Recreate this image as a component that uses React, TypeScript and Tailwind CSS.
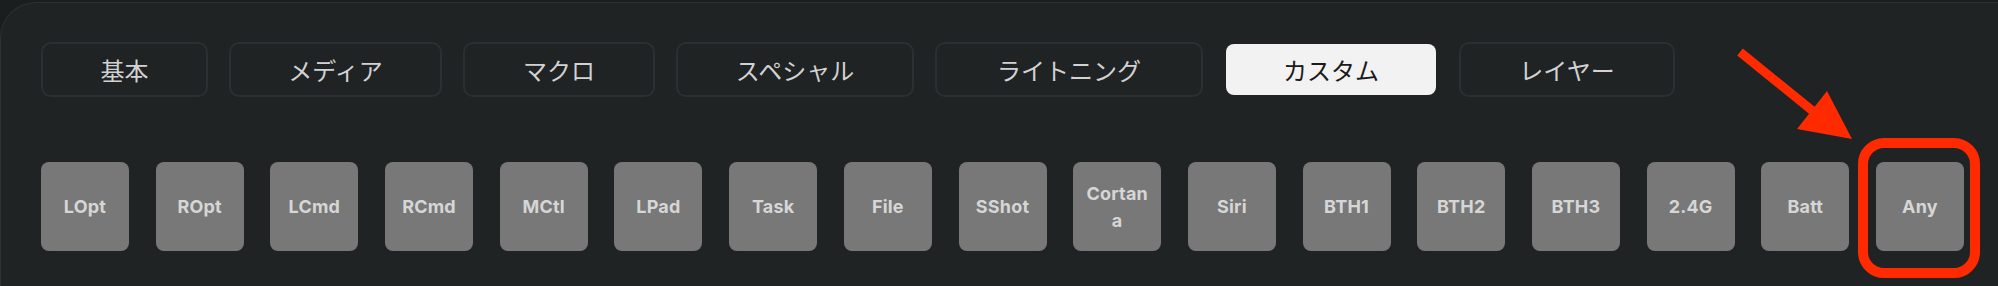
import React from 'react';

type Tab = { label: string; width: string; active?: boolean };

const tabs: Tab[] = [
  { label: '基本', width: 'w-[167px]' },
  { label: 'メディア', width: 'w-[213px]' },
  { label: 'マクロ', width: 'w-[192px]' },
  { label: 'スペシャル', width: 'w-[238px]' },
  { label: 'ライトニング', width: 'w-[268px]' },
  { label: 'カスタム', width: 'w-[214px]', active: true },
  { label: 'レイヤー', width: 'w-[216px]' },
];

const keys = [
  'LOpt',
  'ROpt',
  'LCmd',
  'RCmd',
  'MCtl',
  'LPad',
  'Task',
  'File',
  'SShot',
  'Cortana',
  'Siri',
  'BTH1',
  'BTH2',
  'BTH3',
  '2.4G',
  'Batt',
  'Any',
];

const TabButton = ({ tab }: { tab: Tab }) => (
  <button
    type="button"
    className={
      tab.active
        ? `${tab.width} flex h-[55px] items-center justify-center rounded-[10px] border-2 border-transparent bg-[#f2f2f2] bg-clip-padding text-[24px] text-[#1a1a1a]`
        : `${tab.width} flex h-[55px] items-center justify-center rounded-[10px] border-2 border-[#2b2f31] text-[24px] text-[#d2d2d2]`
    }
    style={{ fontFamily: '"Noto Sans CJK JP", "Noto Sans", sans-serif' }}
  >
    {tab.label}
  </button>
);

const KeyButton = ({ label }: { label: string }) => (
  <button
    type="button"
    className="flex h-[89px] w-[88px] shrink-0 items-center justify-center rounded-[8px] bg-[#787878] px-[10px] text-center text-[18px] font-bold leading-[27px] tracking-[0.2px] break-all text-[#d6d6d6]"
    style={{ fontFamily: 'Inter, "Liberation Sans", sans-serif' }}
  >
    {label}
  </button>
);

export default function App() {
  return (
    <div className="relative h-[286px] w-[1998px] overflow-hidden bg-[#1b1e1f]">
      <div className="mt-[2px] h-[300px] w-[2040px] rounded-tl-[36px] border-t border-l border-[#2d3133] bg-[#1f2324] pt-[39px] pl-[40px]">
        <div className="flex gap-[21px]">
          {tabs.map((tab) => (
            <TabButton key={tab.label} tab={tab} />
          ))}
        </div>
        <div className="mt-[65px] flex gap-[26.7px]">
          {keys.map((k) => (
            <KeyButton key={k} label={k} />
          ))}
        </div>
      </div>

      {/* annotation: arrow + highlight */}
      <svg
        className="pointer-events-none absolute left-[1730px] top-[40px] h-[110px] w-[130px]"
        viewBox="0 0 130 110"
      >
        <line x1="10" y1="12" x2="84" y2="72" stroke="#ff2a00" strokeWidth="9" />
        <polygon points="122,99 67,89 97,51" fill="#ff2a00" />
      </svg>
      <div className="pointer-events-none absolute left-[1858px] top-[138px] h-[140px] w-[122px] rounded-[26px] border-[10px] border-[#ff2a00]" />
    </div>
  );
}
